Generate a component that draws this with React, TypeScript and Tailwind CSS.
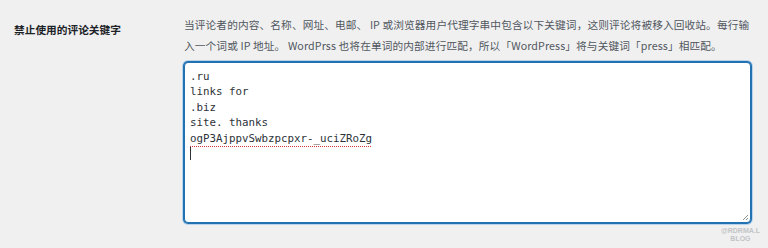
export default function App() {
  const keywords = ['.ru', 'links for', '.biz', 'site. thanks']

  return (
    <div className="w-[768px] h-[248px] bg-[#f0f0f1] overflow-hidden relative" style={{ fontFamily: '"Noto Sans CJK SC", "Noto Sans", sans-serif' }}>
      <div className="flex pt-[14px]">
        {/* Label column */}
        <div className="w-[184px] pl-[14px] pt-[5px] shrink-0">
          <label className="text-[10.7px] font-bold text-[#1d2327] leading-[21px] block">禁止使用的评论关键字</label>
        </div>

        {/* Field column */}
        <div className="w-[568px]">
          <p className="text-[10.7px] text-[#50575e] leading-[21px] tracking-[0.1px]">
            当评论者的内容、名称、网址、电邮、 IP 或浏览器用户代理字串中包含以下关键词，这则评论将被移入回收站。每行输入一个词或 IP 地址。 WordPrss 也将在单词的内部进行匹配，所以「WordPress」将与关键词「press」相匹配。
          </p>
          <div className="mt-[6px] h-[161px] w-[567px] bg-white rounded-[4px] border border-[#2271b1] shadow-[0_0_0_1px_#2271b1,0_0_0_2px_#b8d4ec] relative px-[5px] py-[6px]">
            <div className="text-[10.8px] leading-[15.4px] text-[#2c3338]" style={{ fontFamily: '"DejaVu Sans Mono", "Liberation Mono", monospace' }}>
              {keywords.map((k) => (
                <div key={k}>{k}</div>
              ))}
              <div>
                <span className="underline decoration-dotted decoration-[#d63638] underline-offset-[4px]">ogP3AjppvSwbzpcpxr-_uciZRoZg</span>
              </div>
              <div className="h-[15.4px] flex items-center">
                <span className="w-px h-[13px] bg-[#2c3338]" />
              </div>
            </div>
            {/* resize handle */}
            <svg className="absolute right-[1px] bottom-[1px]" width="8" height="8" viewBox="0 0 8 8">
              <path d="M7 2 L2 7 M7 5 L5 7" stroke="#8c8f94" strokeWidth="1" fill="none" />
            </svg>
          </div>
        </div>
      </div>

      {/* watermark */}
      <div className="absolute right-[8px] bottom-[5px] text-[7px] leading-[8px] text-[#c3c4c7] text-center font-bold" style={{ fontFamily: '"Liberation Sans", sans-serif' }}>
        <div>@RDRMA.L</div>
        <div>BLOG</div>
      </div>
    </div>
  )
}
